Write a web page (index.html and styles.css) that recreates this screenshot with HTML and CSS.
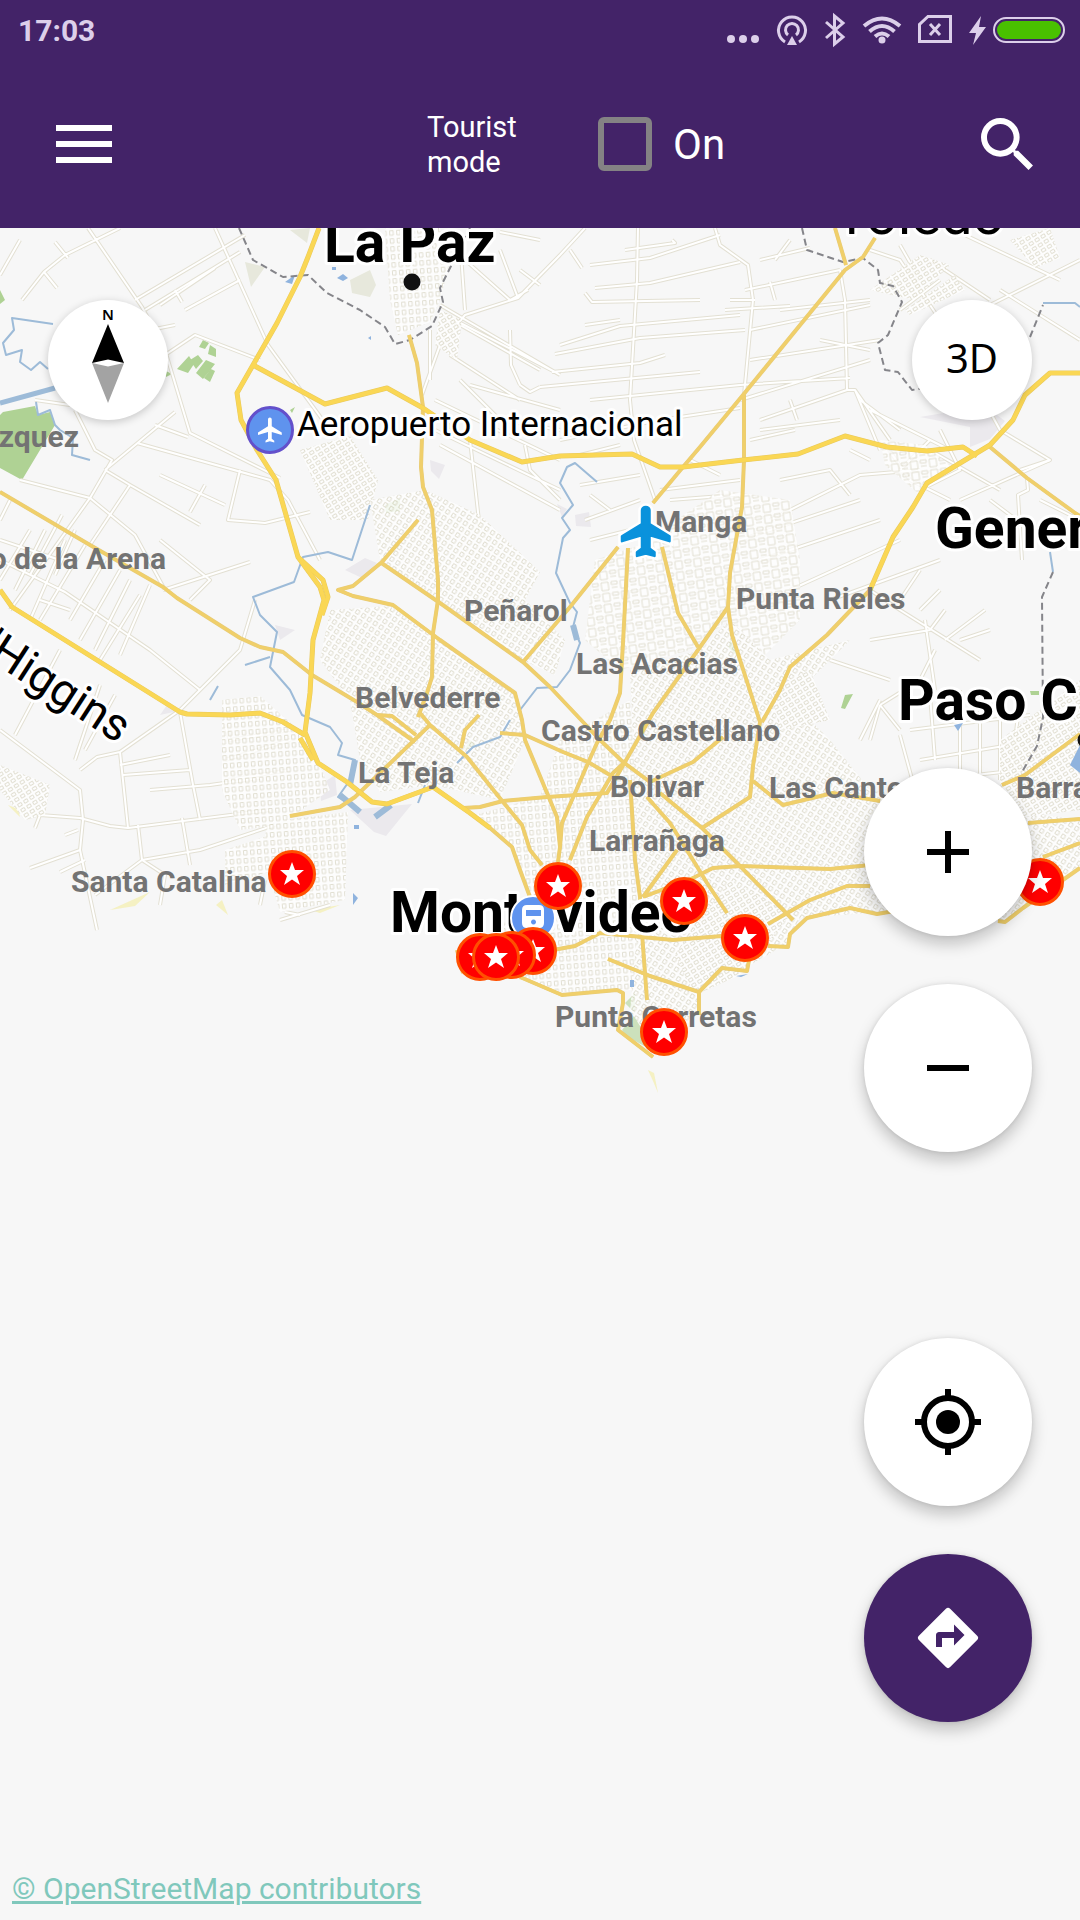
FILE: index.html
```html
<!DOCTYPE html>
<html lang="en">
<head>
    <meta charset="UTF-8">
    <meta name="viewport" content="width=device-width, initial-scale=1.0">
    <title>Map - Montevideo</title>
    <link rel="stylesheet" href="styles.css">
</head>
<body>
    <header class="header">
        <div class="status-bar">
            <span class="clock">17:03</span>
            <svg class="status-icons" viewBox="724 0 344 60" width="344" height="60" aria-hidden="true">
                <g fill="#dccfea">
                    <circle cx="731" cy="39" r="4"/><circle cx="743" cy="39" r="4"/><circle cx="755" cy="39" r="4"/>
                    <path d="M792 36l5 9h-10z"/>
                    <circle cx="882" cy="40" r="3.5"/>
                    <path d="M981 16l-12 17h7l-3 12 13-18h-7z"/>
                </g>
                <g fill="none" stroke="#dccfea" stroke-width="3">
                    <path d="M785 42a13.500 13.500 0 1 1 14 0M788 35a6.500 6.500 0 1 1 8 0"/>
                    <path d="M826 22l17 15-8.500 7V16l8.500 7-17 15"/>
                    <path d="M864 26q18-15 36 0M869.500 31.500q12.500-11 25 0M875 36.500q7-6 14 0" stroke-width="4"/>
                    <path d="M928 16.500h22.500v25h-31v-17zM930 24l10 11M940 24l-10 11"/>
                    <rect x="994" y="18" width="70" height="24" rx="12" stroke-width="2"/>
                </g>
                <rect x="997" y="21" width="64" height="18" rx="9" fill="#49c000"/>
            </svg>
        </div>

        <div class="toolbar">
            <button class="tool-btn menu-btn" aria-label="Menu">
                <svg viewBox="0 0 56 38" width="56" height="38"><path fill="#fff" d="M0 0h56v6H0zM0 16h56v6H0zM0 32h56v6H0z"/></svg>
            </button>
            <div class="mode">
                <span class="mode-title">Tourist mode</span>
                <label class="mode-switch"><input type="checkbox" class="mode-check"><span>On</span></label>
            </div>
            <button class="tool-btn search-btn" aria-label="Search">
                <svg viewBox="3 3 17.500 17.500" width="52" height="52"><path fill="#fff" d="M15.500 14h-.79l-.28-.27A6.470 6.470 0 0 0 16 9.500 6.500 6.500 0 1 0 9.500 16c1.610 0 3.090-.59 4.230-1.570l.27.28v.79l5 4.990L20.490 19l-4.990-5zm-6 0C7.010 14 5 11.990 5 9.500S7.010 5 9.500 5 14 7.010 14 9.500 11.990 14 9.500 14z"/></svg>
            </button>
        </div>
    </header>

    <main class="map">
        <svg class="map-canvas" viewBox="0 228 1080 1692" preserveAspectRatio="xMidYMin slice">
            <defs>
                <pattern id="grid-a" width="7" height="7" patternUnits="userSpaceOnUse" patternTransform="rotate(33)">
                    <rect width="7" height="7" fill="#fff"/><path class="block" d="M1.500 1.500h3.500v4h-3.500z"/>
                </pattern>
                <pattern id="grid-b" width="7" height="8" patternUnits="userSpaceOnUse" patternTransform="rotate(-4)">
                    <rect width="7" height="8" fill="#fff"/><path class="block" d="M1.500 1.500h3.500v4.500h-3.500z"/>
                </pattern>
                <pattern id="grid-c" width="7" height="6" patternUnits="userSpaceOnUse" patternTransform="rotate(-32)">
                    <rect width="7" height="6" fill="#fff"/><path class="block" d="M1.500 1.500h4v3h-4z"/>
                </pattern>
                <pattern id="grid-d" width="19" height="11" patternUnits="userSpaceOnUse" patternTransform="rotate(-8)">
                    <rect width="19" height="11" fill="#fff"/><path class="block" d="M1 1h7v8h-7zM11 1h6v3h-6zM11 7h6"/>
                </pattern>

                <!-- country lanes -->
                <g id="lanes">
                    <path d="M88 228L142 307 165 350 190 433 280 478M215 228L268 345 330 430M0 275L20 240M22 300L44 272 65 255 120 228M55 242L68 258M44 272L57 288"/>
                    <path d="M135 300L245 235M145 310L240 252M160 305L215 268M185 310L240 280M150 330L175 325M175 290L182 302M165 355L195 335 260 360"/>
                    <path d="M105 470L175 412M75 410L95 450 112 460 90 498 60 540 10 610M35 400L70 405M137 443L270 480 288 500 320 560 M240 470L228 520 265 523 310 512M155 425L188 437"/>
                    <path d="M105 470L130 485 200 525M90 498L135 535 165 590M20 480L90 498M160 475L225 505M205 485L190 512M130 485L90 545M163 590L250 562M160 540L210 580 190 600"/>
                    <path d="M30 530L0 580M45 530L15 590M62 515L30 575M75 530L55 575M105 560L70 620M120 570L80 640M130 580L95 650M150 585L120 655M0 540L60 560M40 600L70 610M0 560L65 592 150 650 200 690M65 540L30 620M10 500L0 520M85 545L40 620M140 595L100 660"/>
                    <path d="M100 685L75 760M115 695L85 750M60 650L15 735M0 730L80 790 83 820 80 850 97 930M80 770L97 757 120 752 180 710 240 650 255 600M120 752L128 828 270 810M180 712L193 785 200 820M123 775L190 770M120 765L170 755M150 790L210 785 260 778M35 828L40 815 80 818 110 826 128 828M138 825L142 860 200 850 275 825M182 818L190 865M142 860L95 895M142 860L165 875 160 905M30 868L80 850M65 835L78 830M225 760L290 740M225 725L230 740 290 730M228 780L290 770"/>
                    <path d="M260 905L265 880M280 920L330 905M300 915L285 912M60 872L85 860"/>
                    <path d="M585 228L560 255 518 298 465 315 440 345 422 395M460 240L465 310M500 250L518 298M465 260L510 300 528 290M638 228L637 280 630 400 634 440 655 500M715 228L720 245 748 265 753 300 744 395M540 240L500 232M570 250L582 268M520 270L540 285"/>
                    <path d="M440 305L560 375M445 315L555 372M460 325L540 370M430 330L430 380M590 265L650 258 720 235M595 288L650 283 740 262M585 293L592 302 700 300M620 320L585 325M560 345L620 326 740 315M555 354L640 338 745 330M552 372L640 363 665 355M540 387L700 372M590 400L640 395 740 385M520 385L530 392 540 387M510 330L511 365 520 385M625 250L675 243 672 240M450 355L520 400M470 385L560 410M435 400L560 460M435 430L560 490M440 445L560 510M470 440L480 530M525 445L530 470 560 500M460 380L500 420 560 430M560 440L660 420 740 408M580 455L620 445M590 540L630 530M585 520L640 500M580 485L640 475M590 495L610 510M660 490L740 480M670 500L735 495M690 460L720 475M760 260L810 248M745 290L840 270M730 300L755 300M725 310L790 306M770 282L775 300M780 310L870 300M750 330L870 305M750 360L880 340M740 385L850 378M740 400L870 360M840 270L845 300 847 390 760 420M847 390L855 390 890 440M855 390L880 450M860 400L900 430M790 240L775 260M870 250L900 260 940 320 1000 430 1050 460 1020 470M900 245L920 280M900 310L940 280M960 320L1080 260M930 260L990 300M950 228L1060 280M1000 290L1080 340M820 340L870 350M750 440L795 430M760 430L840 420M790 400L797 420M870 410L950 450"/>
                    <path d="M887 447L910 480 950 500M930 450L1000 490M900 470L930 440M920 490L960 470 940 430M960 500L1050 460M850 450L870 460M780 480L830 470 850 495M770 520L860 475 920 470M740 540L860 500M760 560L880 520M790 590L900 540M830 600L940 560M870 590L900 610 980 660M900 600L920 570M940 590L920 610M870 640L930 630 945 610M945 640L985 610M960 640L990 630M925 620L935 690M830 660L890 680M880 705L870 740M880 705L920 680 935 650M880 705L900 730M860 740L880 700M900 735L915 790M930 695L935 760M960 690L960 770M980 690L980 780M1000 700L1000 780M1020 700L1010 780M920 760L1010 745M910 730L1030 715M930 780L1020 770M1027 478L1028 490 1018 495 1022 560M1040 500L1080 520M990 500L1030 530"/>
                </g>

                <!-- secondary roads -->
                <g id="roads-b">
                    <path d="M0 492L90 545 163 587 177 598 240 638 260 647 283 652 312 675 357 702 377 715 415 742"/>
                    <path d="M409 335L417 363 423 407 421 467 423 487 432 510 438 580 438 600 433 633 432 677 427 693 418 717"/>
                    <path d="M418 520L382 562 353 586 338 590 353 596 393 605 440 640 515 693 522 720 525 740 557 817 560 847 558 862"/>
                    <path d="M380 562L440 603 523 662 550 687 600 740 623 762 650 782M660 793L702 828 737 863 793 920"/>
                    <path d="M618 547L570 607 523 662"/>
                    <path d="M875 238L863 257 845 270 743 395 700 447 683 467 653 503M835 228L846 265"/>
                    <path d="M744 395L744 460 742 507 730 573 728 607 698 650 653 713 625 762 613 773 587 817 570 860"/>
                    <path d="M728 607L732 635 760 722 753 766 750 797 702 828M628 548L623 643 620 693 610 720 597 743 588 763 562 823 560 847M662 547L678 613 698 647"/>
                    <path d="M870 590L827 635 790 667 780 690 762 722M990 447L1027 478 1075 513 1080 516"/>
                    <path d="M500 733L525 735 563 752 588 762 615 778M463 808L480 807 503 801 547 797 607 793 625 762M420 713L430 725 467 757 503 802 522 825 530 850 542 865M430 725L355 797 340 807 290 816M479 715L465 730 461 748M377 715L392 716 416 735"/>
                    <path d="M630 780L635 860 640 897 642 933 647 1000M650 782L693 762 723 737M647 797L670 823 693 860 707 883 727 913M643 897L677 850M643 897L693 878 713 868 740 866 830 869 870 865"/>
                    <path d="M553 950L575 946 600 933 673 940 722 936M608 959L650 976 699 992M753 781L783 805 833 793 880 801M768 924L810 900 847 886 870 886M1002 785L1025 775 1080 734M1028 823L1080 819M1043 857L1080 843M998 921L1005 922 1023 908 1080 868"/>
                    <path d="M490 828L512 847 520 870 530 897M457 950L463 973M520 977L562 995 617 990 623 993 623 1003 618 1030 653 1057M699 1015L699 992 722 968 747 971 750 955M768 946L788 947 790 934 807 918 850 908 877 914 900 910"/>
                </g>

                <!-- highways -->
                <g id="roads-a">
                    <path d="M319 228L308 257 300 277 277 323 253 365 237 393 241 420 257 450 276 480 298 557 320 587 324 600 313 640 310 693 305 732 318 763 347 782 372 802 387 804 433 787 470 813 490 828"/>
                    <path d="M253 365L325 404 387 388 423 408 470 440 522 462 560 456 632 454 660 467 683 467 743 460 798 454 845 436 887 447 927 451 963 447 977 456"/>
                    <path d="M0 590L12 607 180 712 187 714 230 715 260 713 283 722 305 735"/>
                    <path d="M1080 373L1050 373 1025 395 1013 420 990 445 927 483 913 507 893 537 870 590"/>
                    <path d="M298 557L323 580 328 597 322 615M300 738L313 760"/>
                </g>

                <path id="plane" d="M21 16v-2l-8-5V3.500C13 2.670 12.330 2 11.500 2S10 2.670 10 3.500V9l-8 5v2l8-2.500V19l-2 1.500V22l3.500-1 3.500 1v-1.500L13 19v-5.500l8 2.500z"/>
                <g id="pin">
                    <circle r="22.500" fill="#f00" stroke="#ff5000" stroke-width="3"/>
                    <path fill="#fff" d="M0-12L3-4 12-4 5 2 8 11 0 5.500-8 11-5 2-12-4-3-4z"/>
                </g>
            </defs>

            <!-- parks, industrial areas -->
            <g fill="#afd294">
                <path d="M3 412L35 406 38 415 50 412 55 425 22 480 0 468V415z"/>
                <path d="M0 290L5 300 0 304zM177 369l12-13 5 8-6 9zM190 360l8-5 5 6-7 8zM203 340l6 3-4 6-6-2zM210 345l6 4v8l-8-3zM196 373l10-13 9 4-12 15zM204 378l7-9 4 2-5 11zM166 371l6 3-6 3zM290 410l5-3-3 6zM730 640l7 8v8l-8-8zM845 695l8-1-8 15-4-1zM1030 691h9v4h-8z"/>
                <path d="M625 1003l10-10v20zM622 1030l12-14 12 12 2 20-22-12zM470 740l6 5-12 5zM385 505l15-7v13l-14 2z" opacity=".6"/>
            </g>
            <path fill="#ebe9ed" d="M345 570l20-12 12 5-15 15zM160 715l18-4-9-9zM350 810l62-6-26 32-12-4zM920 417l50 10v20l20-8 15-18-20-15zM320 785l15-10 2 20-16 6zM430 460l15 5-6 14-8-8zM575 515l14-3 2 15-15-1zM557 504l10 5-5 8zM275 625l20 5-15 10z"/>
            <path fill="#e7e8dc" d="M245 262l20 5-14 20zM350 280l20-10 6 15-6 12-18-4zM290 230l20-2-3 15z"/>
            <path fill="#f3eca0" opacity=".6" d="M8 805l10 4 2 8zM110 910l40-18-15 14zM222 900l6 15-12-10zM310 910l30-5-20 8zM648 1070l6 3 4 20-5-12z"/>

            <use href="#lanes" class="lane-case"/>
            <use href="#lanes" class="lane"/>

            <!-- built-up blocks -->
            <g class="blocks">
                <path fill="url(#grid-b)" d="M385 228L440 228 450 262 440 300 430 322 398 335 390 300zM268 822L348 812 345 900 280 912 262 850zM225 850l45-15 5 35-50 15z"/>
                <path fill="url(#grid-c)" d="M300 450L350 436 378 480 368 520 330 520zM870 290l50-35 30 10-35 35zM905 310l50-35 10 15-55 25zM1010 240l40-12 10 30-25 10zM440 310l22 10-5 40-22-15z"/>
                <path fill="url(#grid-a)" d="M370 500L425 490 480 515 540 572 525 600 565 640 555 675 523 660 470 622 440 600 380 560zM330 610L390 606 515 695 525 740 500 800 433 785 380 792 360 760 350 700 320 660z"/>
                <path fill="url(#grid-d)" d="M595 560L640 545 720 490 790 500 800 560 800 620 760 660 728 620 690 650 620 670 585 640zM880 440l45 5 25 20-30 30-35-30z"/>
                <path fill="url(#grid-b)" d="M222 700L260 696 310 740 330 790 280 825 240 830 222 790zM560 740L630 700 640 800 640 900 640 990 562 992 460 962 530 900 515 850 475 815 540 797z"/>
                <path fill="url(#grid-a)" d="M630 670L700 650 730 620 770 660 850 640 790 700 830 740 870 790 1080 820 1080 865 1005 920 880 912 800 918 785 945 745 968 722 965 698 990 698 1015 655 1050 630 1010 640 900z"/>
                <path fill="url(#grid-c)" d="M770 690L810 670 830 720 780 730zM0 765l50 20-5 30-20 5-25-30zM730 880l60 35-50 60-45 20-20-40zM1000 740l80-60v130l-80 10z"/>
            </g>

            <!-- water -->
            <g class="water">
                <path d="M53 324L12 318 14 330 3 343 6 355 22 350 20 362 31 370 40 362 48 369M36 402L38 415 50 410 55 425 60 430 73 438 72 455 90 460"/>
                <path d="M370 505L352 560 328 552 303 557 294 582 253 597 260 615 277 632 270 667 290 690 302 715 330 727 342 743 338 755 355 760 350 780 338 797 358 810M218 686L210 700M270 657L245 665"/>
                <path d="M597 482L575 463 567 467 560 483 573 505 562 518 570 530 563 538 556 573 570 603 577 612 573 627 580 643 570 670 557 687 537 688 520 710"/>
                <path d="M510 720L500 737 473 747 457 763M425 785L418 803M1043 303L1075 303 1080 307M1050 552L1053 572"/>
                <path d="M0 403L55 388" stroke-width="5"/>
                <path d="M355 760L350 785M340 795L360 812M375 817L391 805M573 625L577 640" stroke-width="6"/>
            </g>
            <path fill="#8fb3de" d="M285 282l10-7-3 9zM337 278l6-4 5 4-5 3zM332 267h4v3h-4zM368 338l3-2v4zM354 825h5v4h-5zM353 893l5 5-5 7zM954 725l9-2-5 8zM1080 745v28l-10-8zM630 980h4v7h-4zM736 976l12-2-7 3z"/>
            <path class="border" d="M239 228L253 260 283 277 308 275 327 293 360 310 385 327 395 344 410 340 432 326 443 302 440 288 450 268 470 228M802 228L807 250 843 262 863 258 878 270 880 283 893 286 902 302 888 335 878 343 885 370 898 372 912 390 925 388M1030 337L1043 305M1053 572L1042 597 1043 718 1037 746 1022 772"/>

            <use href="#roads-b" class="road-b-case"/>
            <use href="#roads-b" class="road-b"/>
            <use href="#roads-a" class="road-a-case"/>
            <use href="#roads-a" class="road-a"/>

            <g class="suburb">
                <text x="79" y="447" text-anchor="end">Vázquez</text>
                <text x="166" y="569" text-anchor="end">Paso de la Arena</text>
                <text x="655" y="532">Manga</text>
                <text x="464" y="621">Peñarol</text>
                <text x="736" y="609">Punta Rieles</text>
                <text x="576" y="674">Las Acacias</text>
                <text x="355" y="708">Belvederre</text>
                <text x="541" y="741">Castro Castellano</text>
                <text x="358" y="783">La Teja</text>
                <text x="610" y="797">Bolivar</text>
                <text x="769" y="798">Las Canteras</text>
                <text x="1016" y="798">Barra</text>
                <text x="589" y="851">Larrañaga</text>
                <text x="71" y="892">Santa Catalina</text>
                <text x="555" y="1027">Punta Carretas</text>
            </g>

            <g class="city">
                <text x="324" y="262">La Paz</text>
                <text x="935" y="548">General</text>
                <text x="898" y="720">Paso C</text>
                <text x="390" y="932">Montevideo</text>
            </g>
            <g class="town">
                <text x="835" y="234">Toledo</text>
                <text class="street" text-anchor="end" transform="translate(118 744) rotate(33)">O'Higgins</text>
            </g>
            <circle cx="412" cy="282" r="8.500" fill="#111"/>
            <circle cx="1086" cy="740" r="8.500" fill="#111"/>

            <text class="poi" x="297" y="436">Aeropuerto Internacional</text>
            <circle cx="270" cy="430" r="22.500" fill="#5f93ee" stroke="#6350cb" stroke-width="3"/>
            <use href="#plane" fill="#fff" transform="translate(255.500 415) scale(1.250)"/>
            <use href="#plane" class="airport-halo" transform="translate(617 502) scale(2.500 2.450)"/>
            <use href="#plane" class="airport" transform="translate(617 502) scale(2.500 2.450)"/>

            <circle cx="533" cy="918" r="22" fill="#5f93ee" stroke="#fff" stroke-width="2"/>
            <path fill="#fff" fill-rule="evenodd" d="M527 905h12q5 0 5 5v13q0 5-5 5h-12q-5 0-5-5v-13q0-5 5-5zM526 910v6h15v-6zM533.500 919.500a2.500 2.500 0 1 0 .01 0z"/>

            <use href="#pin" x="292" y="874"/>
            <use href="#pin" x="558" y="886"/>
            <use href="#pin" x="684" y="901"/>
            <use href="#pin" x="745" y="938"/>
            <use href="#pin" x="664" y="1032"/>
            <use href="#pin" x="1040" y="882"/>
            <use href="#pin" x="533" y="951"/>
            <use href="#pin" x="512" y="955"/>
            <use href="#pin" x="480" y="957"/>
            <use href="#pin" x="496" y="957"/>
        </svg>

        <div class="map-top">
            <button class="round small" aria-label="Compass">
                <svg viewBox="0 0 120 120" width="120" height="120">
                    <text class="compass-n" x="60" y="20" text-anchor="middle">N</text>
                    <path d="M60 24L76 63 60 59.500 44 63z"/>
                    <path fill="#a3a3a3" d="M44 63L60 66.500 76 63 60 103z"/>
                </svg>
            </button>
            <button class="round small">3D</button>
        </div>

        <div class="map-side">
            <div class="btn-group">
                <button class="round" aria-label="Zoom in">
                    <svg viewBox="0 0 24 24" width="72" height="72"><path d="M19 13h-6v6h-2v-6H5v-2h6V5h2v6h6z"/></svg>
                </button>
                <button class="round" aria-label="Zoom out">
                    <svg viewBox="0 0 24 24" width="72" height="72"><path d="M5 11h14v2H5z"/></svg>
                </button>
            </div>
            <div class="btn-group">
                <button class="round" aria-label="My location">
                    <svg viewBox="0 0 24 24" width="72" height="72"><circle cx="12" cy="12" r="4"/><circle cx="12" cy="12" r="8" fill="none" stroke="#000" stroke-width="2"/><path d="M11 1h2v2.500h-2zM11 20.500h2V23h-2zM1 11h2.500v2H1zM20.500 11H23v2h-2.500z"/></svg>
                </button>
                <button class="round primary" aria-label="Directions">
                    <svg viewBox="0 0 24 24" width="72" height="72"><path fill="#fff" d="M21.710 11.290l-9-9a1 1 0 0 0-1.410 0l-9 9a1 1 0 0 0 0 1.410l9 9a1 1 0 0 0 1.410 0l9-9a1 1 0 0 0 0-1.410zM14 14.500V12h-4v3H8v-4c0-.55.45-1 1-1h5V7.500l3.500 3.500-3.500 3.500z"/></svg>
                </button>
            </div>
        </div>

        <a class="credit" href="#">© OpenStreetMap contributors</a>
    </main>
</body>
</html>
```
FILE: styles.css
```css
* {
    box-sizing: border-box;
}

html, body {
    height: 100%;
}

body {
    margin: 0;
    display: flex;
    flex-direction: column;
    background: #f7f7f7;
    font-family: Roboto, "Liberation Sans", sans-serif;
}

button {
    padding: 0;
    border: 0;
    background: none;
    font-family: inherit;
    color: inherit;
}

/* Header */
.header {
    background: #432368;
    color: #fff;
}

.status-bar {
    display: flex;
    justify-content: space-between;
    align-items: center;
    height: 60px;
    padding: 0 12px 0 18px;
}

.clock {
    font-size: 30px;
    font-weight: 700;
    color: #dccfea;
}

.toolbar {
    display: flex;
    align-items: center;
    height: 168px;
}

.tool-btn {
    display: flex;
    align-items: center;
    justify-content: center;
    height: 100%;
}

.menu-btn {
    width: 168px;
}

.search-btn {
    width: 146px;
}

.mode {
    flex: 1;
    display: flex;
    align-items: center;
    padding-left: 259px;
}

.mode-title {
    width: 171px;
    padding: 2px 60px 0 0;
    font-size: 29px;
    line-height: 35px;
}

.mode-switch {
    display: flex;
    align-items: center;
    gap: 21px;
    font-size: 42px;
}

.mode-check {
    appearance: none;
    width: 54px;
    height: 54px;
    margin: 0;
    border: 6px solid #848284;
    border-radius: 6px;
}

/* Map */
.map {
    position: relative;
    flex: 1;
    min-height: 0;
    overflow: hidden;
}

.map-canvas {
    display: block;
    width: 100%;
    height: 100%;
}

.block { fill: none; stroke: #dddaca; stroke-width: 1; }
.blocks { opacity: .8; }
.lane-case, .lane, .water, .border,
.road-a, .road-a-case, .road-b, .road-b-case {
    fill: none;
    stroke-linejoin: round;
}

.lane-case { stroke: #e3e0d3; stroke-width: 4; }
.lane { stroke: #fff; stroke-width: 2; }
.water { stroke: #9dbbd8; stroke-width: 2; }
.border { stroke: #85858a; stroke-width: 2; stroke-dasharray: 7 4; }
.road-b-case { stroke: #e6cb7a; stroke-width: 4; }
.road-b { stroke: #f0cf6a; stroke-width: 3; }
.road-a-case { stroke: #e8c95e; stroke-width: 5; }
.road-a { stroke: #fad755; stroke-width: 4; }

.suburb {
    font-size: 30px;
    font-weight: 700;
    fill: #737373;
}

.city, .town, .poi {
    stroke: #fff;
    stroke-width: 6;
    stroke-linejoin: round;
    paint-order: stroke;
}

.city {
    font-size: 57px;
    font-weight: 700;
}

.town {
    font-size: 56px;
}

.street {
    font-size: 46px;
}

.poi {
    font-size: 35px;
}

.airport {
    fill: #0a92dc;
    stroke: #0a92dc;
    stroke-width: 1;
    stroke-linejoin: round;
}

.airport-halo {
    fill: #fff;
    stroke: #fff;
    stroke-width: 3;
}

/* Floating controls */
.round {
    display: flex;
    align-items: center;
    justify-content: center;
    width: 168px;
    height: 168px;
    border-radius: 50%;
    background: #fff;
    box-shadow: 0 8px 16px rgba(0, 0, 0, .22), 0 0 4px rgba(0, 0, 0, .1);
}

.small {
    width: 120px;
    height: 120px;
    padding-bottom: 4px;
    font-family: "Noto Sans", sans-serif;
    font-size: 40px;
    line-height: 48px;
    color: #000;
    box-shadow: 0 2px 8px rgba(0, 0, 0, .2);
}

.small svg {
    margin-bottom: -4px;
}

.primary {
    background: #432368;
}

.compass-n {
    font-family: "Noto Sans", sans-serif;
    font-size: 15px;
    font-weight: 600;
}

.map-top {
    position: absolute;
    top: 72px;
    left: 48px;
    right: 48px;
    display: flex;
    justify-content: space-between;
}

.map-side {
    position: absolute;
    right: 48px;
    bottom: 198px;
    display: flex;
    flex-direction: column;
    gap: 186px;
}

.btn-group {
    display: flex;
    flex-direction: column;
    gap: 48px;
}

.credit {
    position: absolute;
    left: 12px;
    bottom: 13px;
    font-size: 30px;
    line-height: 36px;
    color: #80c8bc;
}
```
